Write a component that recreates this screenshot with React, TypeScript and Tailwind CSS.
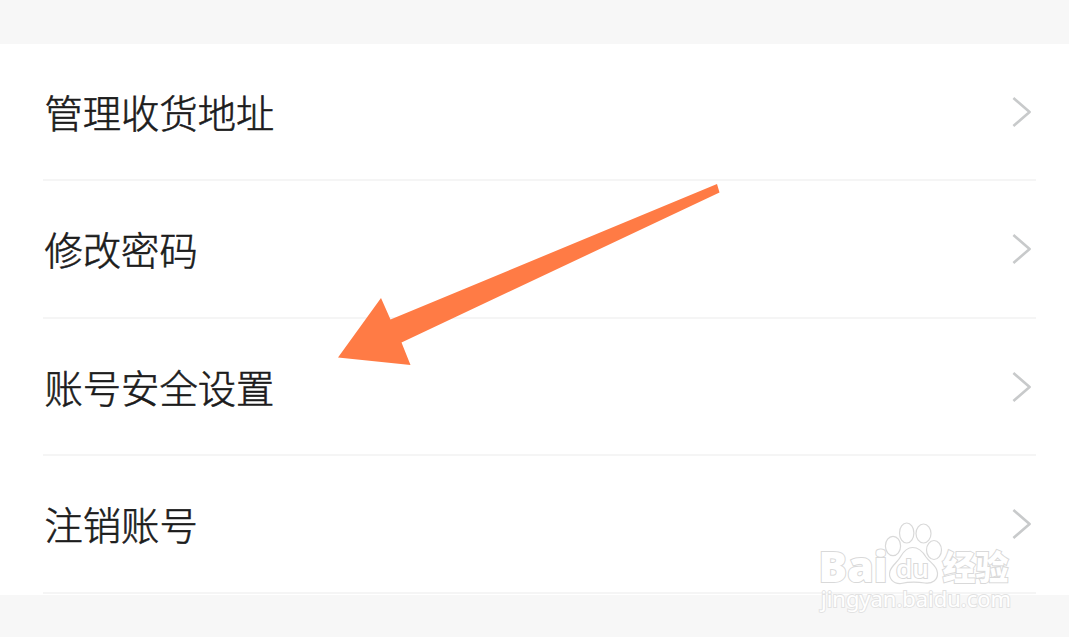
const ITEMS = [
  { id: 'address', label: '管理收货地址' },
  { id: 'password', label: '修改密码' },
  { id: 'security', label: '账号安全设置' },
  { id: 'cancel', label: '注销账号' },
];

function Chevron() {
  return (
    <svg width="20" height="32" viewBox="0 0 20 32" fill="none" className="flex-shrink-0">
      <path d="M1.400 2L17.600 16L1.400 30" stroke="#c8cacb" strokeWidth="2.6" strokeLinejoin="round" />
    </svg>
  );
}

function SettingRow({ label }: { label: string }) {
  return (
    <li className="h-[137.5px] pl-[43px] pr-[33px]">
      <div className="flex h-full items-center justify-between border-b-2 border-[#f5f5f5] pr-[4px] pl-[1.5px]">
        <span className="pt-[0.6px] text-[38.3px] font-light leading-[38px] text-[#1c1c1c] [-webkit-text-stroke:0.6px_#1c1c1c]">
          {label}
        </span>
        <Chevron />
      </div>
    </li>
  );
}

function PointerArrow() {
  return (
    <svg
      className="pointer-events-none absolute left-[337px] top-[182px]"
      width="384"
      height="184"
      viewBox="337 182 384 184"
    >
      <path d="M717 184L719.500 192.500L401.500 342.500L410.500 365L338 357.500L381 298L390.500 319.500Z" fill="#ff7b45" />
    </svg>
  );
}

function Watermark() {
  return (
    <svg
      className="pointer-events-none absolute left-[815px] top-[515px]"
      width="202"
      height="104"
      viewBox="815 515 202 104"
      fill="#ffffff"
      stroke="#d9d9d9"
      strokeWidth="1.2"
    >
      {/* paw */}
      <ellipse cx="893" cy="546" rx="7.600" ry="9.600" />
      <ellipse cx="906.700" cy="533" rx="7.200" ry="10" />
      <ellipse cx="923.500" cy="533.500" rx="7.500" ry="9.500" />
      <ellipse cx="934" cy="550" rx="7.500" ry="9.500" />
      <path d="M912.500 547.500C919 547.500 923 552 926 557C930 563 937 565 937.500 573C938 580 932 584 925 583C918 582 908 582 901 583.500C893 584 888 578 890 571C892 565 898 562 901 556C904 551 907 547.500 912.500 547.500Z" />

      <g fontWeight="800" paintOrder="stroke" strokeWidth="2">
        <text x="818.5" y="581.500" fontFamily="'Open Sans', sans-serif" fontSize="42.500" textLength="69" lengthAdjust="spacingAndGlyphs">
          Bai
        </text>
        <text x="896" y="578" fontFamily="'Open Sans', sans-serif" fontSize="25" fontWeight="600" textLength="33" lengthAdjust="spacingAndGlyphs">
          du
        </text>
        <text x="942.500" y="579.500" fontFamily="'Noto Sans CJK SC', sans-serif" fontSize="34" fontWeight="900" textLength="66" lengthAdjust="spacingAndGlyphs">
          经验
        </text>
      </g>
      <text x="821" y="607" fontFamily="'Noto Sans', sans-serif" fontSize="21" stroke="#e2e2e2" strokeWidth="1.800" paintOrder="stroke" textLength="190" lengthAdjust="spacingAndGlyphs">
        jingyan.baidu.com
      </text>
    </svg>
  );
}

export default function App() {
  return (
    <div className="relative h-[637px] w-full overflow-hidden bg-[#f7f7f7] pt-[43.8px] font-['Noto_Sans_CJK_SC',sans-serif]">
      <ul className="bg-white pb-[1px]">
        {ITEMS.map((item) => (
          <SettingRow key={item.id} label={item.label} />
        ))}
      </ul>
      <PointerArrow />
      <Watermark />
    </div>
  );
}
